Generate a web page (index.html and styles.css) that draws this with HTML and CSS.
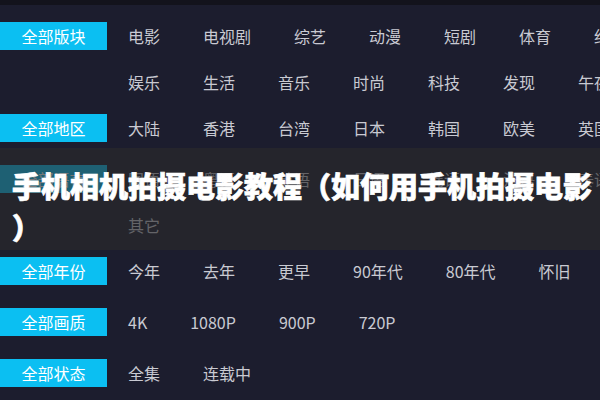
FILE: index.html
```html
<!DOCTYPE html>
<html lang="zh-CN">
<head>
<meta charset="utf-8">
<title>手机相机拍摄电影教程</title>
<link rel="stylesheet" href="styles.css">
</head>
<body>
<div class="page">
  <div class="topbar"></div>
  <div class="filters">
    <div class="group multi">
      <div class="label">全部版块</div>
      <div class="items">
        <span class="item">电影</span><span class="item">电视剧</span><span class="item">综艺</span><span class="item">动漫</span><span class="item">短剧</span><span class="item">体育</span><span class="item">纪录片</span>
        <span class="item">娱乐</span><span class="item">生活</span><span class="item">音乐</span><span class="item">时尚</span><span class="item">科技</span><span class="item">发现</span><span class="item">午夜</span>
      </div>
    </div>
    <div class="group">
      <div class="label">全部地区</div>
      <div class="items">
        <span class="item">大陆</span><span class="item">香港</span><span class="item">台湾</span><span class="item">日本</span><span class="item">韩国</span><span class="item">欧美</span><span class="item">英国</span>
      </div>
    </div>
    <div class="group multi">
      <div class="label">全部语言</div>
      <div class="items">
        <span class="item">国语</span><span class="item">粤语</span><span class="item">英语</span><span class="item">日语</span><span class="item">韩语</span><span class="item">法语</span><span class="item">泰语</span>
        <span class="item">其它</span>
      </div>
    </div>
    <div class="group">
      <div class="label">全部年份</div>
      <div class="items">
        <span class="item">今年</span><span class="item">去年</span><span class="item">更早</span><span class="item">90年代</span><span class="item">80年代</span><span class="item">怀旧</span>
      </div>
    </div>
    <div class="group">
      <div class="label">全部画质</div>
      <div class="items">
        <span class="item">4K</span><span class="item">1080P</span><span class="item">900P</span><span class="item">720P</span>
      </div>
    </div>
    <div class="group">
      <div class="label">全部状态</div>
      <div class="items">
        <span class="item">全集</span><span class="item">连载中</span>
      </div>
    </div>
  </div>
  <div class="title-band">
    <h1 class="title">手机相机拍摄电影教程（如何用手机拍摄电影）</h1>
  </div>
</div>
</body>
</html>
```
FILE: styles.css
```css
html, body {
  margin: 0;
  padding: 0;
  background: #1c1d2e;
}

.page {
  position: relative;
  width: 600px;
  height: 400px;
  overflow: hidden;
  background: #1c1d2e;
  font-family: "Noto Sans CJK SC", "Microsoft YaHei", sans-serif;
}

.topbar {
  height: 5px;
  background: #13131c;
}

.filters {
  padding-top: 17px;
}

.group {
  display: flex;
  align-items: flex-start;
  margin-bottom: 23px;
}

.group.multi {
  margin-bottom: 18px;
}

.label {
  flex: none;
  width: 107px;
  height: 28px;
  line-height: 28px;
  background: #0bbff2;
  color: #ffffff;
  font-size: 16px;
  text-align: center;
}

.items {
  flex: none;
  width: 560px;
  margin-left: 21px;
  display: flex;
  flex-wrap: wrap;
  row-gap: 18px;
}

.item {
  height: 28px;
  line-height: 28px;
  margin-right: 43px;
  font-size: 16px;
  color: #c9cad2;
  white-space: nowrap;
}

.title-band {
  position: absolute;
  top: 148px;
  left: 0;
  right: 0;
  height: 102px;
  background: rgba(42, 42, 44, 0.64);
}

.title {
  margin: 0;
  padding: 17px 8px 0 12px;
  font-size: 29px;
  line-height: 41px;
  font-weight: 900;
  color: #ffffff;
  -webkit-text-stroke: 0.7px #ffffff;
  line-break: anywhere;
}
```
